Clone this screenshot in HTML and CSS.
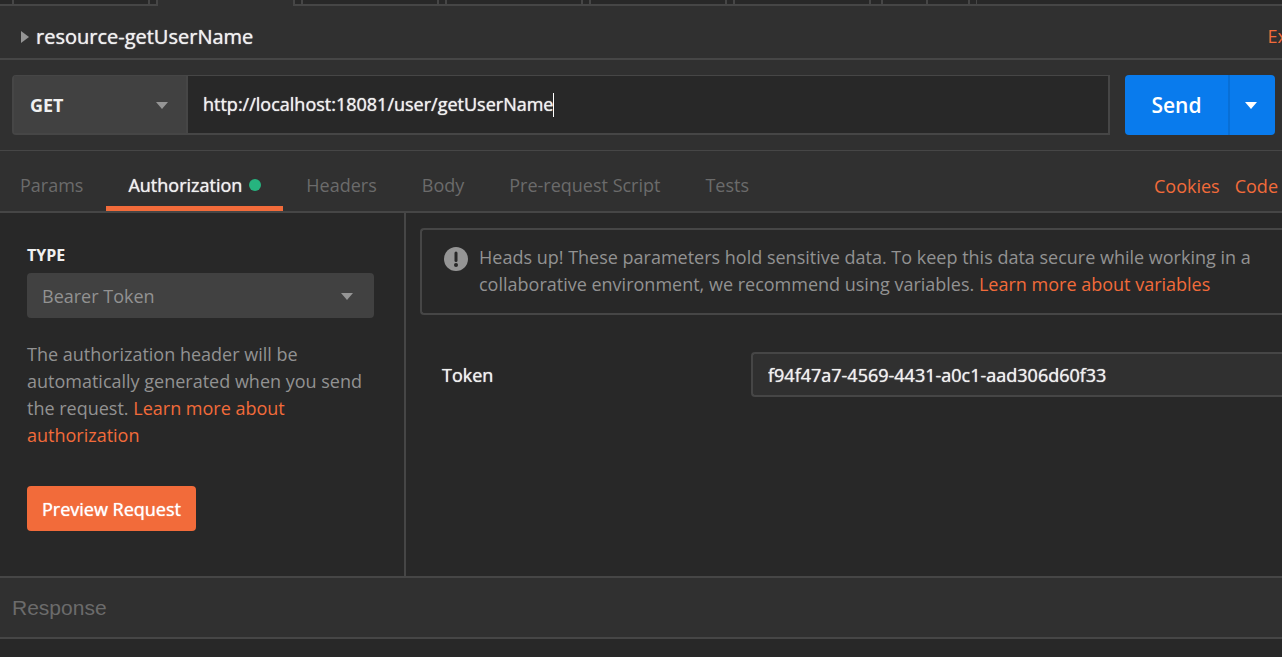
FILE: index.html
```html
<!DOCTYPE html>
<html lang="en">
<head>
  <meta charset="utf-8">
  <meta name="viewport" content="width=device-width, initial-scale=1">
  <title>resource-getUserName</title>
  <link rel="stylesheet" href="styles.css">
</head>
<body>
  <div class="app">
    <div class="tab-strip">
      <div class="strip-tab"></div>
      <div class="strip-tab strip-tab-active"></div>
      <div class="strip-tab"></div>
      <div class="strip-tab"></div>
      <div class="strip-tab"></div>
      <div class="strip-tab"></div>
      <div class="strip-tab strip-button"></div>
      <div class="strip-end"></div>
    </div>

    <header class="request-header">
      <h1 class="request-name medium">
        <svg class="disclosure" width="8" height="12" viewBox="0 0 8 12" aria-hidden="true"><path d="M0 0L8 6L0 12Z"/></svg>
        resource-getUserName
      </h1>
      <a class="link examples" href="#">Ex</a>
    </header>

    <form class="url-row">
      <div class="url-group">
        <div class="select-wrap method">
          <select class="method-select" aria-label="Method"><option>GET</option></select>
          <svg class="arrow" width="12" height="7" viewBox="0 0 12 7" aria-hidden="true"><path d="M0 0H12L6 7Z"/></svg>
        </div>
        <div class="url-field">
          <input class="url-input medium" type="text" aria-label="Request URL" value="http://localhost:18081/user/getUserName">
          <span class="caret"></span>
        </div>
      </div>
      <div class="send-group">
        <button class="send" type="button">Send</button>
        <button class="send-more" type="button" aria-label="Send options">
          <svg width="12" height="7" viewBox="0 0 12 7" aria-hidden="true"><path d="M0 0H12L6 7Z"/></svg>
        </button>
      </div>
    </form>

    <nav class="request-nav">
      <div class="nav-tabs">
        <button class="nav-tab" type="button">Params</button>
        <button class="nav-tab nav-tab-active medium" type="button">Authorization<span class="dot"></span></button>
        <button class="nav-tab" type="button">Headers</button>
        <button class="nav-tab" type="button">Body</button>
        <button class="nav-tab" type="button">Pre-request Script</button>
        <button class="nav-tab" type="button">Tests</button>
      </div>
      <div class="nav-links">
        <a class="link" href="#">Cookies</a>
        <a class="link" href="#">Code</a>
      </div>
    </nav>

    <main class="auth">
      <section class="auth-side">
        <label class="type-label" for="auth-type">TYPE</label>
        <div class="select-wrap">
          <select class="type-select" id="auth-type"><option>Bearer Token</option></select>
          <svg class="arrow arrow-type" width="12" height="7" viewBox="0 0 12 7" aria-hidden="true"><path d="M0 0H12L6 7Z"/></svg>
        </div>
        <p class="auth-text">The authorization header will be automatically generated when you send the request. <a class="link" href="#">Learn more about authorization</a></p>
        <button class="preview medium" type="button">Preview Request</button>
      </section>
      <section class="auth-main">
        <div class="notice">
          <svg class="notice-icon" width="24" height="24" viewBox="0 0 24 24" aria-hidden="true">
            <circle class="notice-disc" cx="12" cy="12" r="12"/>
            <path class="notice-mark" d="M12 6V13.5"/>
            <circle class="notice-point" cx="12" cy="18" r="2"/>
          </svg>
          <p class="notice-text">Heads up! These parameters hold sensitive data. To keep this data secure while working in a collaborative environment, we recommend using variables. <a class="link" href="#">Learn more about variables</a></p>
        </div>
        <div class="token-row">
          <label class="token-label medium" for="token">Token</label>
          <input class="token-input medium" id="token" type="text" value="f94f47a7-4569-4431-a0c1-aad306d60f33">
        </div>
      </section>
    </main>

    <section class="response">
      <h2 class="response-title">Response</h2>
    </section>
  </div>
</body>
</html>
```
FILE: styles.css
```css
* {
  box-sizing: border-box;
}

body {
  margin: 0;
  background: #282828;
  color: #f0f0f0;
  font-family: "Open Sans", sans-serif;
  font-size: 18px;
  line-height: 27px;
}

button,
input,
select {
  margin: 0;
  border: 0;
  padding: 0;
  color: inherit;
  font: inherit;
  outline: 0;
}

h1,
h2,
p {
  margin: 0;
}

.app {
  display: flex;
  flex-direction: column;
  min-height: 100vh;
  overflow: hidden;
}

.link {
  color: #f26b3a;
  text-decoration: none;
}

/* Medium weight: the shadow thickens the regular face */
.medium {
  font-weight: 500;
  text-shadow: 0 0 1px currentColor;
}

/* Open request tabs */
.tab-strip {
  display: flex;
  gap: 6px;
  height: 6px;
  padding-left: 12px;
  border-bottom: 2px solid #464646;
}

.strip-tab {
  width: 138px;
  height: 4px;
  border: solid #464646;
  border-width: 0 2px;
}

.strip-tab-active {
  width: 139px;
  height: 6px;
  background: #303030;
}

.strip-button {
  width: 47px;
  margin-left: 4px;
}

.strip-end {
  width: 9px;
  height: 4px;
  margin-left: 34px;
  border: solid #464646;
  border-width: 0 1px 0 2px;
}

/* Request name */
.request-header {
  display: flex;
  align-items: center;
  justify-content: space-between;
  padding: 17px 0 8px 21px;
  border-bottom: 2px solid #464646;
  background: #303030;
}

.request-name {
  display: flex;
  align-items: center;
  gap: 7px;
  font-size: 20px;
  line-height: 27px;
}

.disclosure {
  fill: #959595;
}

.examples {
  margin-right: -5px;
}

/* Method, address and send */
.url-row {
  display: flex;
  gap: 15px;
  padding: 15px 7px 15px 12px;
  background: #303030;
}

.url-group {
  display: flex;
  flex: 1;
  height: 60px;
  border: 2px solid #464646;
  border-top-width: 1px;
  border-radius: 4px 0 0 4px;
}

.select-wrap {
  position: relative;
  display: flex;
}

.method {
  width: 174px;
  border-right: 2px solid #464646;
}

.method-select,
.type-select {
  width: 100%;
  appearance: none;
  background: #414141;
}

.method-select {
  padding: 1px 0 0 16px;
  font-weight: 700;
}

.arrow {
  position: absolute;
  top: calc(50% - 3px);
  right: 18px;
  fill: #959595;
  pointer-events: none;
}

.arrow-type {
  right: 21px;
}

.url-field {
  display: flex;
  flex: 1;
  align-items: center;
  padding-left: 15px;
  background: #282828;
}

.url-input {
  field-sizing: content;
  background: transparent;
}

.caret {
  width: 1px;
  height: 24px;
  background: #ffffff;
}

.send-group {
  display: flex;
  overflow: hidden;
  border-radius: 4px;
  background: #097bed;
  color: #ffffff;
}

.send {
  width: 103px;
  background: transparent;
  font-size: 21px;
  font-weight: 600;
}

.send-more {
  display: flex;
  align-items: center;
  justify-content: center;
  width: 47px;
  padding-right: 3px;
  border-left: 2px solid #086fd6;
  background: transparent;
  fill: #ffffff;
}

/* Request sections */
.request-nav {
  display: flex;
  align-items: stretch;
  justify-content: space-between;
  height: 63px;
  padding-right: 4px;
  border: solid #464646;
  border-width: 1px 0 2px;
  background: #303030;
}

.nav-tabs {
  display: flex;
  gap: 1px;
}

.nav-tab {
  display: flex;
  align-items: center;
  gap: 7px;
  padding: 8px 22px 0;
  border-bottom: 0 solid #f26b3a;
  background: transparent;
  color: #6b6b6b;
}

.nav-tab:first-child {
  padding-left: 20px;
}

.nav-tab-active {
  padding-top: 13px;
  border-bottom-width: 5px;
  color: #f0f0f0;
}

.dot {
  width: 12px;
  height: 12px;
  border-radius: 50%;
  background: #26b47f;
}

.nav-links {
  display: flex;
  align-items: center;
  gap: 15px;
  padding-top: 10px;
}

/* Authorization */
.auth {
  display: flex;
}

.auth-side {
  flex: none;
  width: 406px;
  padding: 29px 30px 45px 27px;
  border-right: 2px solid #464646;
}

.type-label {
  display: block;
  padding-bottom: 4px;
  font-size: 16px;
  font-weight: 700;
}

.type-select {
  height: 45px;
  padding: 1px 0 0 15px;
  border-radius: 4px;
  color: #929292;
}

.auth-text {
  padding: 23px 0 37px;
  color: #929292;
}

.preview {
  height: 45px;
  padding: 1px 15px 0;
  border-radius: 4px;
  background: #f26b3a;
  color: #ffffff;
}

.auth-main {
  flex: 1;
  min-width: 0;
  padding: 15px 0 0 14px;
}

.notice {
  display: flex;
  gap: 11px;
  padding: 14px 24px 15px 22px;
  border: 2px solid #464646;
  border-right: 0;
  border-radius: 4px 0 0 4px;
}

.notice-icon {
  flex: none;
  margin-top: 3px;
}

.notice-disc {
  fill: #959595;
}

.notice-mark {
  stroke: #282828;
  stroke-width: 3;
  stroke-linecap: round;
}

.notice-point {
  fill: #282828;
}

.notice-text {
  color: #929292;
}

.token-row {
  display: flex;
  align-items: center;
  padding: 37px 0 0 22px;
}

.token-label {
  width: 309px;
  padding-top: 2px;
}

.token-input {
  flex: 1;
  height: 45px;
  padding-left: 15px;
  border: 2px solid #464646;
  border-right: 0;
  border-radius: 4px 0 0 4px;
  background: #303030;
}

/* Response */
.response {
  padding: 16px 12px;
  border: solid #464646;
  border-width: 2px 0;
  background: #303030;
}

.response-title {
  color: #6b6b6b;
  font-family: "Liberation Sans", Arial, sans-serif;
  font-size: 21px;
  font-weight: 400;
  line-height: 27px;
}
```
